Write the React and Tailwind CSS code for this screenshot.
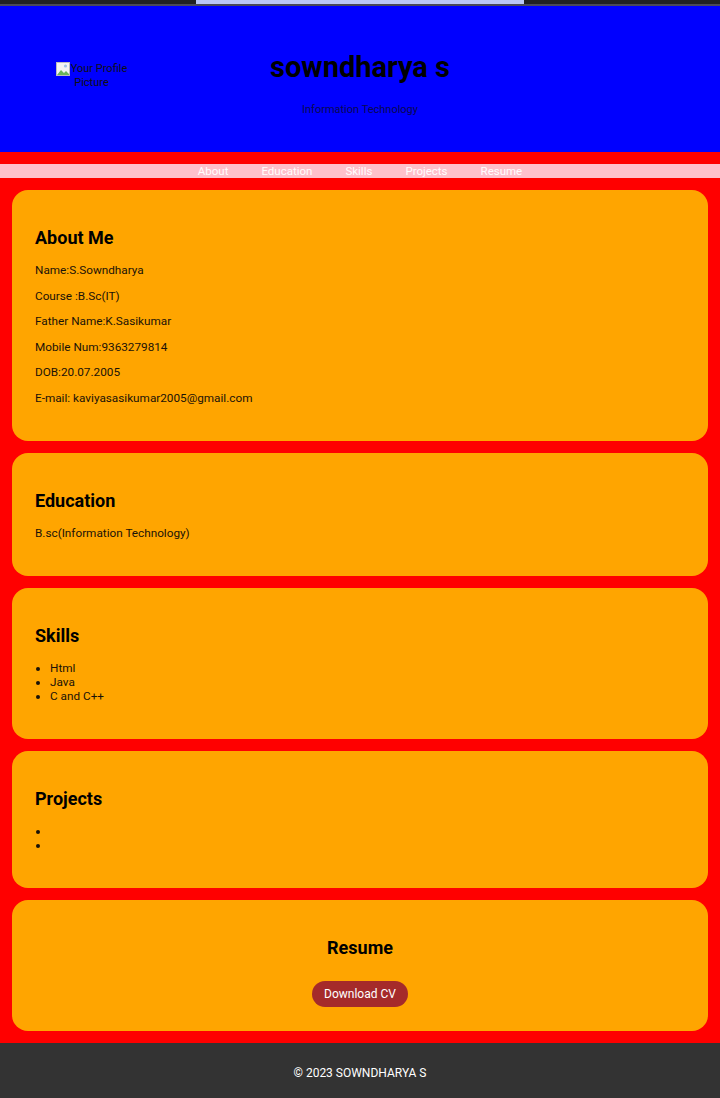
import React from 'react';

const links = ['About', 'Education', 'Skills', 'Projects', 'Resume'];

function Card({ children, className = '' }) {
  return (
    <section className={`bg-[#ffa500] rounded-[16px] px-[23px] py-[24px] ${className}`}>
      {children}
    </section>
  );
}

function Heading({ children, className = '' }) {
  return <h2 className={`text-[18px] font-bold leading-[21px] mt-[13px] mb-[15px] text-black ${className}`}>{children}</h2>;
}

function BrokenImage() {
  return (
    <div className="w-[75px] text-center text-[11px] leading-[14px] text-[#111]">
      <svg className="inline-block align-top mr-[1px]" width="14" height="14" viewBox="0 0 14 14">
        <rect x="0.5" y="0.5" width="13" height="13" fill="#f4f4f4" stroke="#bbb" />
        <path d="M1 13 L5 8 L8 11 L10 9 L13 12 L13 13 Z" fill="#6bb35a" />
        <circle cx="9.5" cy="4" r="1.6" fill="#9fc3e8" />
      </svg>
      Your Profile Picture
    </div>
  );
}

export default function App() {
  const about = [
    'Name:S.Sowndharya',
    'Course :B.Sc(IT)',
    'Father Name:K.Sasikumar',
    'Mobile Num:9363279814',
    'DOB:20.07.2005',
    'E-mail: kaviyasasikumar2005@gmail.com',
  ];

  return (
    <div className="min-h-[1098px] font-['Roboto',sans-serif] text-[11.75px] text-[#1a1208]">
      <div className="h-[4px] bg-[#202124] flex justify-center">
        <div className="w-[328px] bg-[#b9c6f7]" />
      </div>
      <div className="h-[2px] bg-[#4a4a5a]" />

      <header className="bg-[#0000ff] h-[146px] grid grid-cols-[1fr_auto_1fr] items-start">
        <div className="pl-[54px] pt-[56px]">
          <BrokenImage />
        </div>
        <div className="text-center pt-[45px]">
          <h1 className="text-[29px] font-bold leading-[32px] text-black">sowndharya s</h1>
          <p className="text-[11px] leading-[14px] mt-[20px] text-[#0a0a50]">Information Technology</p>
        </div>
        <div />
      </header>

      <main className="bg-[#ff0000] pt-[12px] pb-[12px]">
        <nav className="bg-[#ffc0cb] h-[14px] flex justify-center gap-[33px] text-[11.5px] leading-[14px] text-white">
          {links.map((l) => (
            <a key={l} href="#">{l}</a>
          ))}
        </nav>

        <div className="flex flex-col gap-[12px] px-[12px] pt-[12px]">
          <Card>
            <Heading>About Me</Heading>
            {about.map((t, i) => (
              <p key={i} className={`leading-[14px] ${i === 0 ? 'mt-[15px]' : 'mt-[11.6px]'} ${i === about.length - 1 ? 'mb-[12px]' : ''}`}>
                {t}
              </p>
            ))}
          </Card>

          <Card>
            <Heading>Education</Heading>
            <p className="leading-[14px] my-[12px]">B.sc(Information Technology)</p>
          </Card>

          <Card>
            <Heading>Skills</Heading>
            <ul className="list-disc pl-[15px] mt-[13px] mb-[12px] leading-[14px]">
              <li>Html</li>
              <li>Java</li>
              <li>C and C++</li>
            </ul>
          </Card>

          <Card>
            <Heading>Projects</Heading>
            <ul className="list-disc pl-[15px] my-[12px] leading-[14px]">
              <li>&nbsp;</li>
              <li>&nbsp;</li>
            </ul>
          </Card>

          <Card className="text-center">
            <Heading>Resume</Heading>
            <div className="pt-[8px]">
              <a href="#" className="inline-block bg-[#a52a2a] text-white rounded-full px-[12px] h-[26px] leading-[26px] text-[12px]">
                Download CV
              </a>
            </div>
          </Card>
        </div>
      </main>

      <footer className="bg-[#333333] h-[56px] flex items-center justify-center pt-[4px] text-white text-[12px]">
        © 2023 SOWNDHARYA S
      </footer>
    </div>
  );
}
